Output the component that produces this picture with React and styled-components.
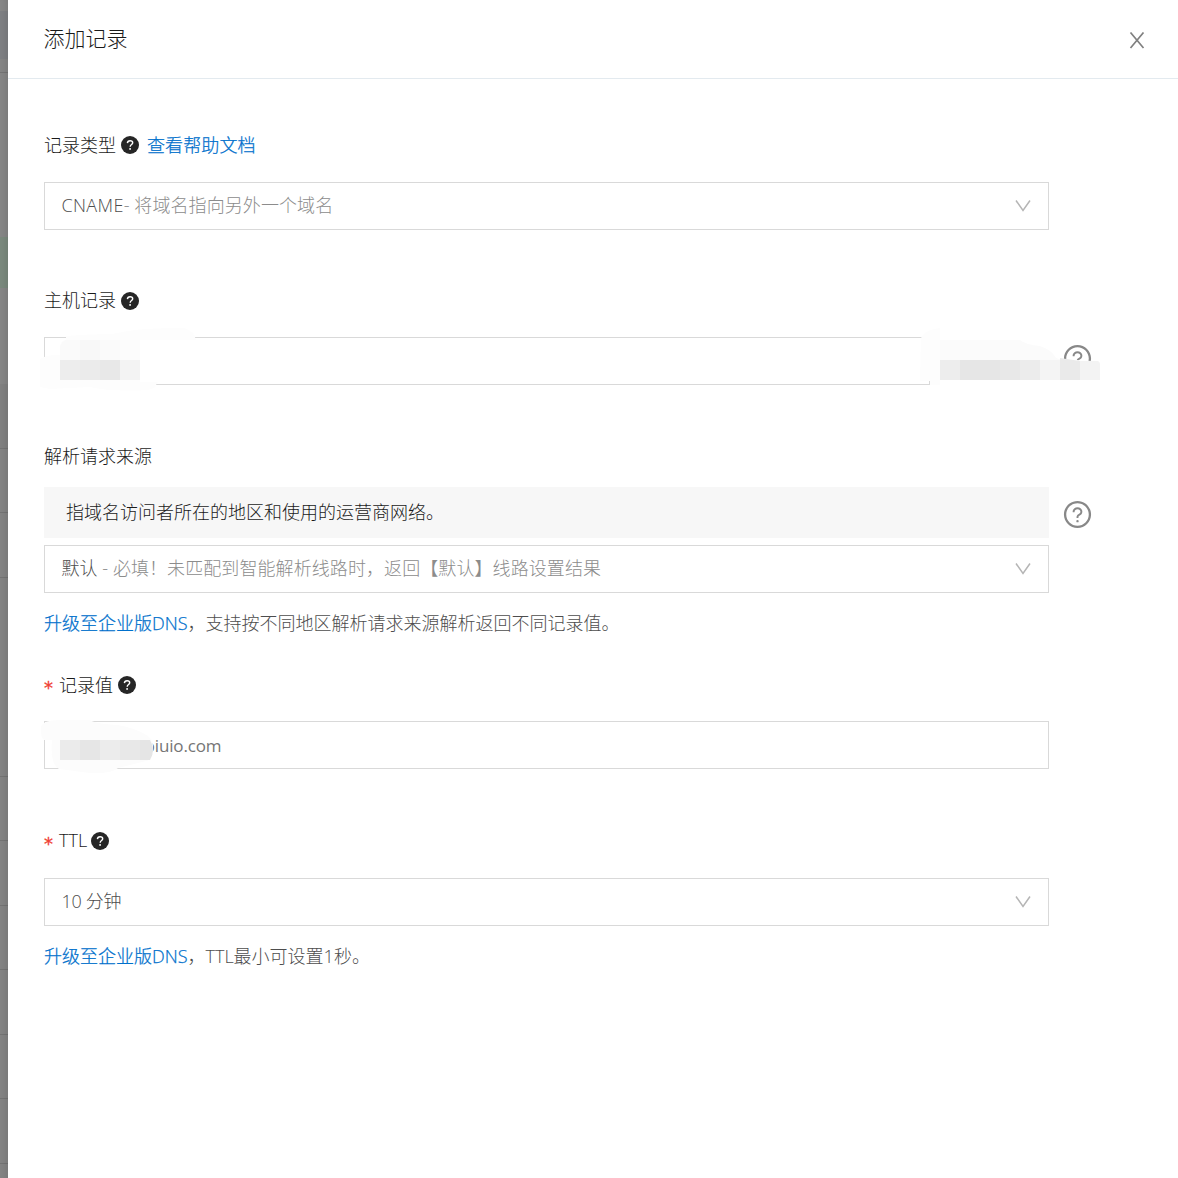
import React from "react";
import styled, { createGlobalStyle } from "styled-components";
import { AiOutlineQuestionCircle } from "react-icons/ai";

const GlobalStyle = createGlobalStyle`
	* {
		box-sizing: border-box;
	}

	body {
		margin: 0;
		background: #fff;
		font-family: "Open Sans", "Noto Sans CJK SC", sans-serif;
		font-size: 18px;
		font-weight: 300;
		overflow: hidden;
	}
`;

const Page = styled.div`
	display: flex;
	width: 1178px;
	height: 1178px;
`;

const Backdrop = styled.div`
	display: flex;
	flex-direction: column;
	width: 8px;
	box-shadow: inset -8px 0 8px -6px rgba(0, 0, 0, 0.12);
`;

const Strip = styled.div`
	position: relative;
	z-index: -1;
	height: ${(props) => props.$height}px;
	background: ${(props) => props.$color || "#858585"};
	border-bottom: ${(props) => (props.$line ? "1px solid #757575" : "none")};
`;

const Drawer = styled.div`
	flex: 1;
	background: #fff;
`;

const Header = styled.div`
	display: flex;
	align-items: center;
	justify-content: space-between;
	height: 79px;
	padding: 0 33.5px 0 35.5px;
	border-bottom: 1px solid #e3eaef;
`;

const Title = styled.h1`
	margin: 0;
	padding-bottom: 2px;
	font-size: 21px;
	font-weight: 300;
	line-height: 30px;
	color: #1a1a1a;
`;

const CloseButton = styled.button`
	display: flex;
	padding: 3px 0 0;
	border: 0;
	background: none;
`;

const Form = styled.div`
	padding: 48px 0 0 36px;
`;

const Field = styled.div`
	position: relative;
	margin-bottom: ${(props) => props.$bottom}px;
`;

const Label = styled.div`
	display: flex;
	align-items: center;
	height: 36px;
	margin-bottom: ${(props) => props.$bottom}px;
	color: #1a1a1a;
`;

const Text = styled.span`
	padding-bottom: ${(props) => props.$lift || 3}px;
	letter-spacing: ${(props) => props.$spacing || 0}px;
`;

const Required = styled.span`
	width: 15px;
	padding-top: 5px;
	font-family: "DejaVu Sans", sans-serif;
	font-size: 18px;
	font-weight: 400;
	color: #f04134;
	-webkit-text-stroke: 0.3px #f04134;
`;

const HelpDot = styled.svg`
	width: 18px;
	height: 18px;
	margin-left: ${(props) => props.$left || 5}px;
`;

const Link = styled.a`
	color: #0070cc;
	-webkit-text-stroke: 0.25px #0070cc;
`;

const DocLink = styled(Link)`
	margin-left: 8px;
	padding-bottom: 3px;
	letter-spacing: 0.1px;
`;

const Row = styled.div`
	display: flex;
	align-items: center;
	gap: 13px;
`;

const Box = styled.div`
	display: flex;
	align-items: center;
	justify-content: space-between;
	width: ${(props) => props.$width || 1005}px;
	height: 48px;
	padding: 0 17px 0 16.5px;
	border: 1px solid #d9d9d9;
	color: #4d4d4d;
	white-space: pre;
`;

const Muted = styled.span`
	color: #8c8c8c;
	letter-spacing: 0.08px;
`;

const InputText = styled.span`
	margin-left: 83px;
	font-size: 17px;
	font-weight: 400;
	letter-spacing: -0.15px;
	color: #757575;
`;

const Hint = styled.div`
	display: flex;
	align-items: center;
	width: 1005px;
	height: 51px;
	padding-left: 22px;
	background: #f7f7f7;
	color: #1a1a1a;
`;

const HintRow = styled(Row)`
	margin-bottom: 7px;
`;

const Note = styled.div`
	display: flex;
	align-items: center;
	height: 36px;
	margin-top: 13px;
	color: #4d4d4d;
`;

const Suffix = styled.div`
	width: 106px;
`;

const HelpIcon = styled(AiOutlineQuestionCircle)`
	width: 31px;
	height: 31px;
	color: #888;
	margin-top: ${(props) => props.$top || 0}px;
`;

// redaction marks painted over the private values
const Smudge = styled.svg`
	position: absolute;
	left: ${(props) => props.$left}px;
	top: ${(props) => props.$top}px;
`;

const strips = [
	{ height: 11, color: "#888" },
	{ height: 48, color: "#7f8184" },
	{ height: 14, color: "#868686", line: true },
	{ height: 164, color: "#878787" },
	{ height: 51, color: "#7b8a7e" },
	{ height: 96, color: "#878787" },
	{ height: 65, color: "#828282", line: true },
	{ height: 64, line: true },
	{ height: 65, line: true },
	{ height: 199, line: true },
	{ height: 64, line: true },
	{ height: 65, line: true },
	{ height: 64, line: true },
	{ height: 65, line: true },
	{ height: 64, line: true },
	{ height: 65, line: true },
	{ height: 14 },
];

const Help = ({ left }) => (
	<HelpDot $left={left} viewBox="0 0 18 18">
		<circle cx="9" cy="9" r="9" fill="#262626" />
		<path
			d="M6.4 7.1C6.5 5.5 7.5 4.7 9.1 4.7C10.7 4.7 11.7 5.5 11.7 6.8C11.7 8.5 9.2 8.5 9.2 10.7"
			fill="none"
			stroke="#fff"
			strokeWidth="1.4"
		/>
		<circle cx="9.1" cy="12.9" r="0.95" fill="#fff" />
	</HelpDot>
);

const Arrow = () => (
	<svg width="16" height="12" viewBox="0 0 16 12">
		<path d="M1 0.5L8 10.5L15 0.5" fill="none" stroke="#b5b5b5" strokeWidth="1.5" />
	</svg>
);

const Blocks = ({ x, y, width, height, colors }) =>
	colors.map((color, i) => (
		<rect key={i} x={x + i * width} y={y} width={width} height={height} fill={color} />
	));

const App = () => {
	return (
		<Page>
			<GlobalStyle />
			<Backdrop>
				{strips.map((s, i) => (
					<Strip key={i} $height={s.height} $color={s.color} $line={s.line} />
				))}
			</Backdrop>
			<Drawer>
				<Header>
					<Title>添加记录</Title>
					<CloseButton aria-label="close">
						<svg width="16" height="17" viewBox="0 0 16 17">
							<path
								d="M1.5 0.5L14.5 16M14.5 0.5L1.5 16"
								fill="none"
								stroke="#808080"
								strokeWidth="1.7"
							/>
						</svg>
					</CloseButton>
				</Header>
				<Form>
					<Field $bottom={53}>
						<Label $bottom={19}>
							<Text>记录类型</Text>
							<Help />
							<DocLink>查看帮助文档</DocLink>
						</Label>
						<Box>
							<Text $lift={5} $spacing={0.35}>
								CNAME<Muted>- 将域名指向另外一个域名</Muted>
							</Text>
							<Arrow />
						</Box>
					</Field>

					<Field $bottom={54}>
						<Label $bottom={18}>
							<Text $lift={4}>主机记录</Text>
							<Help />
						</Label>
						<Row>
							<Box $width={886} />
							<Suffix />
							<HelpIcon $top={-6} />
						</Row>
						<Smudge $left={-4} $top={43} width="158" height="66" viewBox="40 326 158 66">
							<path d="M60 340H140V384H156V386H43V357H66L60 346Z" fill="#fff" />
							<path
								d="M66 336Q90 334 112 334Q140 327 184 328Q194 331 196 340H140V380H158Q156 389 148 390Q110 392 90 387L50 389L40 387V359Q50 354 60 355V345Q62 340 66 340Z"
								fill="#fdfdfd"
							/>
							<rect x="140" y="340" width="56" height="42" fill="#fff" />
							<path d="M66 340H140V360H60V347Q61 342 66 340Z" fill="#fafafa" />
							<rect x="80" y="340" width="20" height="20" fill="#f8f8f8" />
							<rect x="120" y="340" width="20" height="20" fill="#fcfcfc" />
							<Blocks
								x={60}
								y={360}
								width={20}
								height={20}
								colors={["#ededed", "#ebebeb", "#e8e8e8", "#f3f3f3"]}
							/>
						</Smudge>
						<Smudge $left={876} $top={43} width="184" height="62" viewBox="920 326 184 62">
							<path d="M921 338Q926 329 940 328V385H930V381H920Z" fill="#fdfdfd" />
							<path
								d="M940 340H1020Q1026 345 1040 346Q1052 350 1056 358L1062 360H940Z"
								fill="#fbfbfb"
							/>
							<path d="M1060 359L1092 361V380H1060Z" fill="#fff" />
							<Blocks
								x={940}
								y={360}
								width={20}
								height={20}
								colors={["#ededed", "#e6e6e6", "#e6e6e6", "#e8e8e8", "#ececec", "#f4f4f4"]}
							/>
							<path d="M1060 358L1080 361V380H1060Z" fill="#eaeaea" />
							<path d="M1080 361L1098 361Q1100 362 1100 364V380H1080Z" fill="#f3f3f3" />
						</Smudge>
					</Field>

					<Field $bottom={25}>
						<Label $bottom={12}>
							<Text $lift={5}>解析请求来源</Text>
						</Label>
						<HintRow>
							<Hint>
								<Text>指域名访问者所在的地区和使用的运营商网络。</Text>
							</Hint>
							<HelpIcon $top={3} />
						</HintRow>
						<Box>
							<Text $lift={5}>
								默认<Muted> - 必填！未匹配到智能解析线路时，返回【默认】线路设置结果</Muted>
							</Text>
							<Arrow />
						</Box>
						<Note>
							<Text $lift={5}>
								<Link>升级至企业版DNS</Link>，支持按不同地区解析请求来源解析返回不同记录值。
							</Text>
						</Note>
					</Field>

					<Field $bottom={54}>
						<Label $bottom={18}>
							<Required>*</Required>
							<Text>记录值</Text>
							<Help />
						</Label>
						<Box>
							<InputText>biuio.com</InputText>
						</Box>
						<Smudge $left={-4} $top={50} width="116" height="60" viewBox="40 717 116 60">
							<path
								d="M41 727Q43 720 60 720H90Q95 724 118 725Q152 732 153 745Q153 760 146 761L118 768Q112 774 90 773L59 769Q50 764 52 740H44Q40 736 41 727Z"
								fill="#fcfcfc"
							/>
							<Blocks
								x={60}
								y={740}
								width={20}
								height={20}
								colors={["#ebebeb", "#e6e6e6", "#ececec", "#e8e8e8"]}
							/>
							<path d="M140 740H150Q156 750 150 760H140Z" fill="#e5e5e5" />
						</Smudge>
					</Field>

					<Field $bottom={0}>
						<Label $bottom={19}>
							<Required>*</Required>
							<Text>TTL</Text>
							<Help left={4} />
						</Label>
						<Box>
							<Text $lift={5} $spacing={-0.3}>10 分钟</Text>
							<Arrow />
						</Box>
						<Note>
							<Text $lift={5}>
								<Link>升级至企业版DNS</Link>，TTL最小可设置1秒。
							</Text>
						</Note>
					</Field>
				</Form>
			</Drawer>
		</Page>
	);
};

export default App;
